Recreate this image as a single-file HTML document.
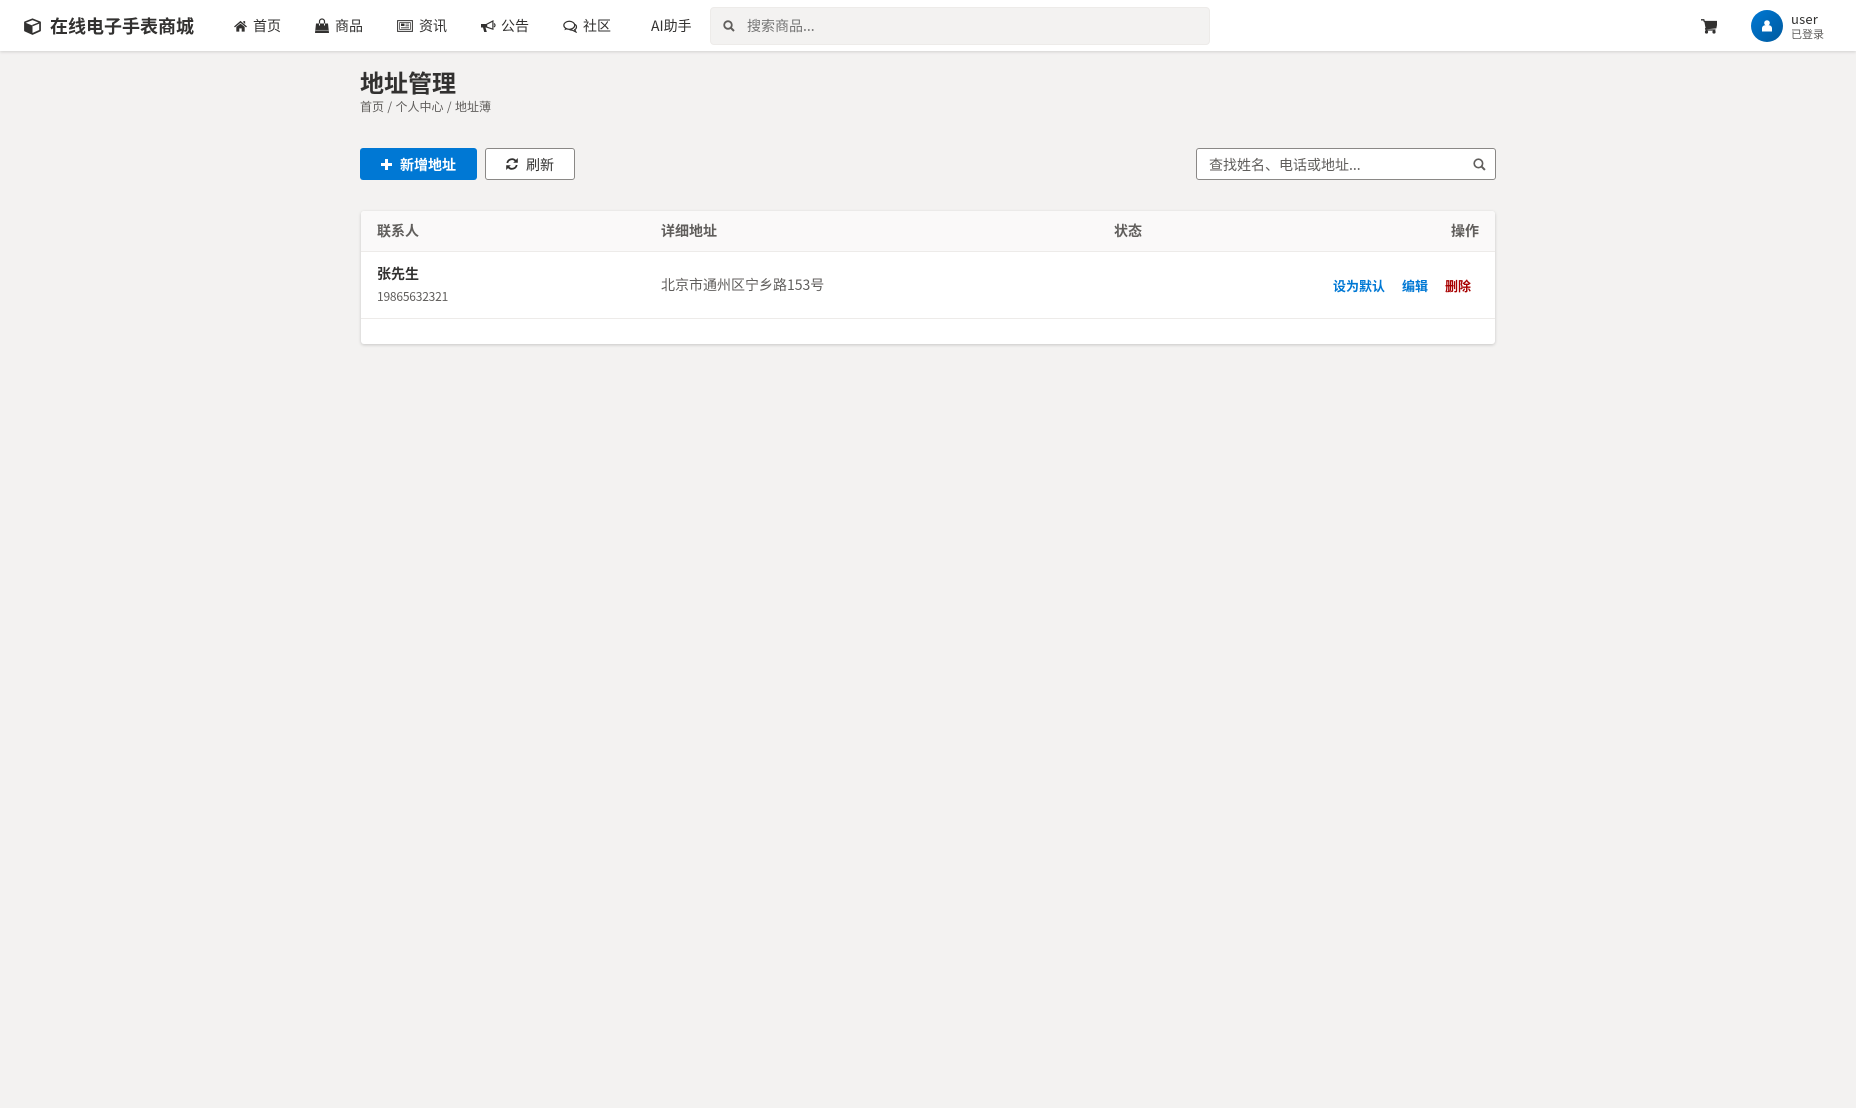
<!DOCTYPE html>
<html lang="zh-CN">
<head>
<meta charset="utf-8">
<title>地址管理</title>
<style>
*{box-sizing:border-box;margin:0;padding:0}
html,body{width:1856px;height:1108px;overflow:hidden;background:#f3f2f1;font-family:"WenQuanYi Zen Hei","Noto Sans CJK SC","Liberation Sans",sans-serif;color:#323130}
.a{position:absolute}
.t{position:absolute;height:20px;line-height:20px;white-space:nowrap;font-size:14px}
.b{font-weight:700}
svg{position:absolute;display:block}
#top{left:0;top:0;width:1856px;height:51px;background:#fff;box-shadow:0 1px 3px rgba(0,0,0,.14)}
</style>
</head>
<body>
<div class="a" id="top"></div>

<svg style="left:24px;top:18px" width="17" height="17" viewBox="0 0 18 17"><path d="M9 .8 L17 4 V12.800 L9 16.400 L1 12.800 V4 Z" fill="#fff" stroke="#323130" stroke-width="1.800" stroke-linejoin="round"/><path d="M1.500 4.500 L9 7.500 V15.800 L1.500 12.500 Z" fill="#323130"/><path d="M9 7.500 L16.500 4.500" stroke="#323130" stroke-width="1.500"/></svg>
<div class="t b" style="left:50px;top:16px;font-size:18px">在线电子手表商城</div>

<svg style="left:234px;top:20px" width="13" height="12" viewBox="0 0 14 12"><path d="M7 .5 L14 6.500 L13 7.500 L7 2.500 L1 7.500 L0 6.500 Z M2.500 7 L7 3.400 L11.500 7 V12 H8.300 V8.500 H5.700 V12 H2.500 Z" fill="#323130"/><path d="M10 .8h2v3l-2-1.700Z" fill="#323130"/></svg>
<div class="t" style="left:253px;top:16px">首页</div>

<svg style="left:315px;top:18px" width="14" height="15" viewBox="0 0 14 15"><path d="M1 5.500 H13 L14 15 H0 Z" fill="#323130"/><path d="M4.500 7.500 V3.500 a2.500 2.500 0 0 1 5 0 V7.500" fill="none" stroke="#323130" stroke-width="1.200"/><path d="M4.500 5.500 v2 M9.500 5.500 v2" stroke="#fff" stroke-width="1"/><path d="M0 12.300H14" stroke="#aaa" stroke-width=".7"/></svg>
<div class="t" style="left:335px;top:16px">商品</div>

<svg style="left:397px;top:20px" width="16" height="12" viewBox="0 0 16 12"><path d="M.6.6H15.400V11.400H.6Z" fill="none" stroke="#323130" stroke-width="1"/><path d="M2.600 2.600H13.400V9.400H2.600Z" fill="none" stroke="#323130" stroke-width=".7"/><path d="M4 3.500h3.500v2.500H4Z" fill="#323130"/><path d="M8.500 4h3.500M8.500 5.800h3.500M4 7.800h8" stroke="#323130" stroke-width=".8"/></svg>
<div class="t" style="left:419px;top:16px">资讯</div>

<svg style="left:481px;top:19px" width="15" height="14" viewBox="0 0 15 14"><path d="M0 5 H5 L12.500 1 V11 L5 8.500 H4.500 L5.800 13 H3.200 L2 8.500 H0 Z" fill="#323130"/><path d="M6.200 5.600 L11.300 3 V9.400 L6.200 7.600 Z" fill="#fff"/><path d="M13 4.500a2 2 0 0 1 0 3.500" fill="none" stroke="#323130" stroke-width="1.200"/></svg>
<div class="t" style="left:501px;top:16px">公告</div>

<svg style="left:563px;top:20px" width="15" height="13" viewBox="0 0 16 13"><ellipse cx="6.700" cy="5.200" rx="5.800" ry="4.300" fill="none" stroke="#323130" stroke-width="1.300"/><path d="M2.500 8 L1.500 10.500 L5 9.200" fill="#323130"/><path d="M13 4.200c2 1.800 1.800 4.500-.5 5.700l1.200 2.400-3.600-1.800c-1.500 0-2.800-.2-3.800-1" fill="none" stroke="#323130" stroke-width="1.300"/></svg>
<div class="t" style="left:583px;top:16px">社区</div>

<div class="t" style="left:651px;top:16px">AI助手</div>

<div class="a" style="left:710px;top:7px;width:500px;height:38px;background:#f3f2f1;border:1px solid #edebe9;border-radius:4px"></div>
<svg style="left:723px;top:20px" width="12" height="12" viewBox="0 0 12 12"><circle cx="5" cy="5" r="3.800" fill="none" stroke="#605e5c" stroke-width="1.800"/><path d="M7.800 7.800 L11 11" stroke="#605e5c" stroke-width="2"/></svg>
<div class="t" style="left:747px;top:16px;color:#757575">搜索商品...</div>

<svg style="left:1701px;top:19px" width="16" height="15" viewBox="0 0 16 15"><path d="M0 .8H2.800L3.300 2.500H16L14.800 8.800L4.700 9.700L5 11H14.500" fill="none" stroke="#323130" stroke-width="1.300"/><path d="M3.300 2.500H16L14.800 8.800L4.700 9.700Z" fill="#323130"/><circle cx="5.500" cy="13" r="1.600" fill="#323130"/><circle cx="13" cy="13" r="1.600" fill="#323130"/></svg>

<div class="a" style="left:1751px;top:10px;width:32px;height:32px;border-radius:50%;background:linear-gradient(135deg,#0078d4,#005a9e)"></div>
<svg style="left:1762px;top:20px" width="10" height="12" viewBox="0 0 10 12"><circle cx="5" cy="3" r="2.800" fill="#fff"/><path d="M0 11.500V8.500C0 6.500 1.500 5.500 2.800 5.300H7.200C8.500 5.500 10 6.500 10 8.500V11.500Z" fill="#fff"/></svg>
<div class="t" style="left:1791px;top:9px;font-size:13px;letter-spacing:.2px">user</div>
<div class="t" style="left:1791px;top:24px;font-size:11px;color:#605e5c">已登录</div>

<div class="t b" style="left:360px;top:72px;font-size:24px">地址管理</div>
<div class="t" style="left:360px;top:97px;font-size:12px;color:#605e5c;word-spacing:.7px">首页 / 个人中心 / 地址薄</div>

<div class="a" style="left:360px;top:148px;width:117px;height:32px;background:#0078d4;border-radius:3px"></div>
<svg style="left:381px;top:159px" width="11" height="11" viewBox="0 0 11 11"><path d="M4 0H7V4H11V7H7V11H4V7H0V4H4Z" fill="#fff"/></svg>
<div class="t" style="left:400px;top:155px;color:#fff;font-weight:700">新增地址</div>

<div class="a" style="left:485px;top:148px;width:90px;height:32px;background:#fff;border:1px solid #8a8886;border-radius:3px"></div>
<svg style="left:506px;top:158px" width="12" height="12" viewBox="0 0 12 12"><path d="M1.300 5A4.800 4.800 0 0 1 9.600 2.800" fill="none" stroke="#323130" stroke-width="1.800"/><path d="M11.800 0V4.700H7.200Z" fill="#323130"/><path d="M10.700 7A4.800 4.800 0 0 1 2.400 9.200" fill="none" stroke="#323130" stroke-width="1.800"/><path d="M.2 12V7.300H4.800Z" fill="#323130"/></svg>
<div class="t" style="left:526px;top:155px">刷新</div>

<div class="a" style="left:1196px;top:148px;width:300px;height:32px;background:#fff;border:1px solid #8a8886;border-radius:3px"></div>
<div class="t" style="left:1209px;top:155px;color:#605e5c">查找姓名、电话或地址...</div>
<svg style="left:1473px;top:158px" width="13" height="13" viewBox="0 0 12 12"><circle cx="5" cy="5" r="3.900" fill="none" stroke="#605e5c" stroke-width="1.500"/><path d="M7.800 7.800 L11 11" stroke="#605e5c" stroke-width="1.900"/></svg>

<div class="a" style="left:361px;top:211px;width:1134px;height:133px;background:#fff;border-radius:3px;box-shadow:0 1px 3px rgba(0,0,0,.18);overflow:hidden">
  <div class="a" style="left:0;top:0;width:1134px;height:41px;background:#faf9f9;border-bottom:1px solid #edebe9"></div>
  <div class="a" style="left:0;top:107px;width:1134px;height:1px;background:#edebe9"></div>
</div>

<div class="t b" style="left:377px;top:221px;color:#605e5c">联系人</div>
<div class="t b" style="left:661px;top:221px;color:#605e5c">详细地址</div>
<div class="t b" style="left:1114px;top:221px;color:#605e5c">状态</div>
<div class="t b" style="right:377px;top:221px;color:#605e5c">操作</div>

<div class="t b" style="left:377px;top:264px">张先生</div>
<div class="t" style="left:377px;top:287px;font-size:12px;color:#605e5c;letter-spacing:-.2px">19865632321</div>
<div class="t" style="left:661px;top:275px;color:#605e5c">北京市通州区宁乡路153号</div>

<div class="t b" style="left:1333px;top:276px;font-size:13px;color:#0078d4">设为默认</div>
<div class="t b" style="left:1402px;top:276px;font-size:13px;color:#0078d4">编辑</div>
<div class="t b" style="left:1445px;top:276px;font-size:13px;color:#a80000">删除</div>
</body>
</html>
